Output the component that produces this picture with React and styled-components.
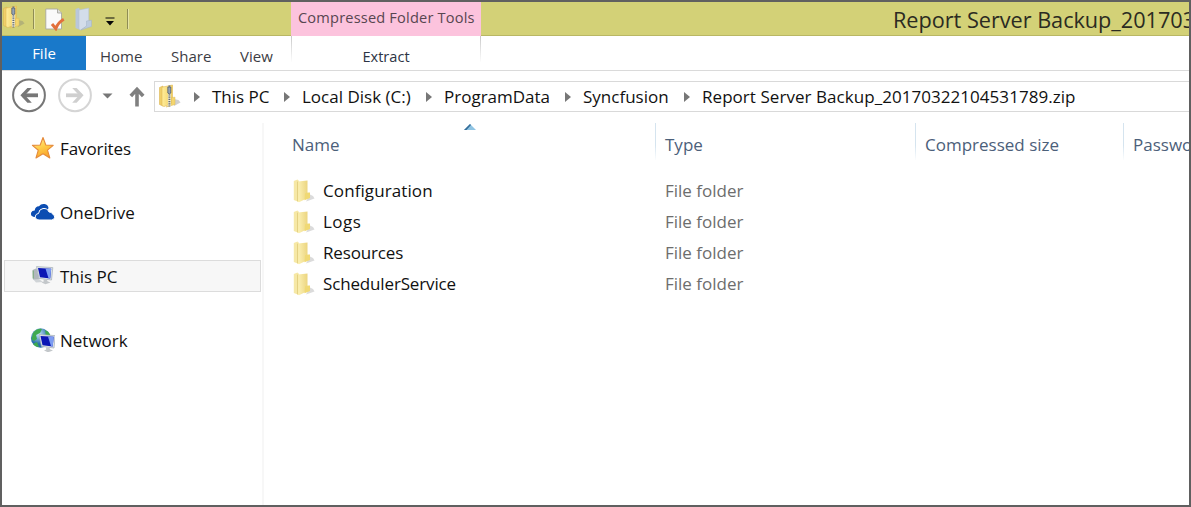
import React from "react";
import styled, { createGlobalStyle } from "styled-components";

const GlobalStyle = createGlobalStyle`
  * { box-sizing: border-box; }
  body { margin: 0; background: #fff; overflow: hidden; }
  svg { display: block; flex: none; }
`;

const Window = styled.div`
  width: 1191px;
  height: 507px;
  border: 2px solid #606060;
  background: #fff;
  display: flex;
  flex-direction: column;
  overflow: hidden;
  font-family: "Open Sans", "Noto Sans", sans-serif;
  font-size: 17px;
  color: #111;
  white-space: nowrap;
`;

const TitleBar = styled.header`
  flex: none;
  height: 34px;
  display: flex;
  background: #d3d177;
  box-shadow: inset 0 -1px #b9b764;
`;

const QuickAccess = styled.div`
  width: 289px;
  display: flex;
  align-items: flex-start;
`;

const Separator = styled.i`
  width: 2px;
  height: 20px;
  margin: 7px 0 0 ${(p) => p.$left}px;
  background: linear-gradient(90deg, #8f8d55 50%, #e7e5a4 50%);
`;

const ContextTitle = styled.div`
  width: 190px;
  background: #fcc3dd;
  color: #574650;
  font-size: 14.6px;
  line-height: 30px;
  padding-left: 7px;
  letter-spacing: 0.18px;
`;

const WindowTitle = styled.div`
  margin-left: 412px;
  flex: 1;
  min-width: 0;
  overflow: hidden;
  font-size: 21.7px;
  line-height: 35px;
  color: #2b2b22;
  letter-spacing: -0.03px;
`;

const Ribbon = styled.nav`
  flex: none;
  height: 35px;
  display: flex;
  border-bottom: 1px solid #dadada;
  font-size: 15px;
  line-height: 41px;
  color: #3c3c44;
`;

const FileTab = styled.div`
  width: 84px;
  background: #1979ca;
  color: #fff;
  text-align: center;
  line-height: 34px;
`;

const Tab = styled.div`
  width: ${(p) => p.$w}px;
  padding-left: ${(p) => p.$pad}px;
`;

const ContextTab = styled.div`
  width: 190px;
  height: 26px;
  text-align: center;
  border: solid;
  border-width: 0 1px;
  border-image: linear-gradient(#c6c6c6, #fff) 1;
  color: #2d3444;
  font-size: 14.6px;
`;

const NavRow = styled.div`
  flex: none;
  height: 49px;
  padding: 7px 0 0 10px;
  display: flex;
  align-items: flex-start;
`;

const NavButtons = styled.div`
  width: 142px;
  height: 35px;
  display: flex;
`;

const NavGap = styled.span`
  width: 11px;
`;

const AddressBar = styled.div`
  flex: 1;
  min-width: 0;
  height: 31px;
  margin-top: 3px;
  border: 1px solid #d9d9d9;
  border-right: 0;
  display: flex;
  align-items: center;
`;

const AddressIcon = styled.span`
  width: 39px;
  padding: 0 0 2px 3px;
`;

const Crumb = styled.span`
  width: ${(p) => p.$w}px;
  letter-spacing: ${(p) => p.$track || 0}px;
  padding-bottom: 1px;
`;

const CrumbArrow = styled.i`
  margin-right: 12px;
  border: 5.5px solid transparent;
  border-left: 6px solid #777;
  border-right: 0;
`;

const Body = styled.div`
  flex: 1;
  display: flex;
  padding-top: 3px;
`;

const Sidebar = styled.aside`
  width: 262px;
  border-right: 2px solid #f7f7f7;
  padding: 9px 1px 0 2px;
  display: flex;
  flex-direction: column;
  gap: 32px;
`;

const SideItem = styled.div`
  height: 32px;
  border: 1px solid ${(p) => (p.$active ? "#dcdcdc" : "transparent")};
  background: ${(p) => (p.$active ? "#f7f7f7" : "transparent")};
  display: flex;
  align-items: center;
  gap: 5px;
  padding-left: 25px;
  letter-spacing: ${(p) => p.$track || 0}px;

  svg { margin-bottom: 1px; }
  span { padding-top: 1px; }
`;

const Listing = styled.main`
  flex: 1;
  min-width: 0;
`;

const HeaderRow = styled.div`
  display: flex;
  height: 52px;
`;

const HeaderCell = styled.div`
  position: relative;
  flex: none;
  width: ${(p) => p.$w}px;
  height: 37px;
  padding-left: ${(p) => p.$pad}px;
  line-height: 43px;
  color: #4c607a;
  border: solid;
  border-width: 0 1px 0 0;
  border-image: linear-gradient(#d5e4ef 60%, #fff) 1;
`;

const SortMark = styled.svg`
  position: absolute;
  left: 200px;
  top: 1px;
`;

const FileRow = styled.div`
  height: 31px;
  display: flex;
  align-items: center;
  padding-left: 29px;
`;

const FileName = styled.span`
  width: 350px;
  padding: 0 0 1px 8px;
  letter-spacing: ${(p) => p.$track || 0}px;
`;

const FileType = styled.span`
  color: #6d6d6d;
  padding-bottom: 1px;
`;

const ZipIcon = () => (
  <svg width="23" height="24" viewBox="0 0 23 24">
    <defs>
      <linearGradient id="zipFront" x1="0" x2="1">
        <stop offset="0" stopColor="#ffed9b" />
        <stop offset="1" stopColor="#f0cd5e" />
      </linearGradient>
    </defs>
    <path d="M16 22 L22.5 18.5 L20.5 16 L16 15Z" fill="#777" opacity=".35" />
    <path d="M1.5 3.5 L5 2 V22 L1.5 20.5Z" fill="#f0cf6a" stroke="#dcb650" strokeWidth=".6" />
    <path d="M4 3.2 L14.5 1 V19 L6 22.6 L4 21.5Z" fill="url(#zipFront)" stroke="#e0bb55" strokeWidth=".6" />
    <path d="M13.5 13.5 L17 13.2 V20.5 L8 23 L13.5 19.5Z" fill="#f4d66e" stroke="#dfba58" strokeWidth=".5" />
    <path d="M11.4 2 V22" stroke="#efe9cc" strokeWidth="3" />
    <path d="M11.4 1.6 V22.4" stroke="#666c72" strokeWidth="1.9" strokeDasharray="1.2 1" />
    <path d="M9.8 3 H12.8 V9 L11.4 10 L9.8 9Z" fill="#93a3b8" stroke="#4a545e" strokeWidth=".7" />
  </svg>
);

const CheckPageIcon = () => (
  <svg width="20" height="24" viewBox="0 0 20 24">
    <path d="M.8 2 H12.5 L16.5 6 V22 H.8Z" fill="#fafafa" stroke="#a8a8a0" strokeWidth=".9" />
    <path d="M12.5 2 V6 H16.5" fill="#ddd" stroke="#a8a8a0" strokeWidth=".9" />
    <path d="M7 17 L10.8 21.6 Q13 15.5 18.8 12.3" fill="none" stroke="#e2703c" strokeWidth="3" />
  </svg>
);

const BlueFolderIcon = () => (
  <svg width="18" height="24" viewBox="0 0 18 24">
    <path d="M.5 2 L4 .8 L5 3 V23 L.5 21Z" fill="#b9c7da" />
    <path d="M4 3 L13.8 1 V18 L5.5 23 L4 22Z" fill="#d3ddea" stroke="#b0bed0" strokeWidth=".5" />
    <path d="M11.5 14 L16.5 13.2 V19.5 L6 23 L11.5 19Z" fill="#bccbde" stroke="#a3b4c8" strokeWidth=".5" />
  </svg>
);

const CustomizeIcon = () => (
  <svg width="10" height="9" viewBox="0 0 10 9">
    <path d="M.5 .5H9.5V1.6H.5Z M1 4H9L5 8.4Z" fill="#080808" />
  </svg>
);

const RoundArrow = ({ color, ring, flip }) => (
  <svg width="35" height="35" viewBox="0 0 35 35">
    <circle cx="17" cy="17.3" r="15.9" fill="none" stroke={ring} strokeWidth="2" />
    <g transform={flip ? "translate(34 .3) scale(-1 1)" : "translate(0 .3)"}>
      <path d="M10.5 17H26" fill="none" stroke={color} strokeWidth="3.8" />
      <path d="M8.4 17L15.4 9.6H19.8L12.9 17L19.8 24.4H15.4Z" fill={color} />
    </g>
  </svg>
);

const FolderIcon = () => (
  <svg width="22" height="24" viewBox="0 0 22 24">
    <defs>
      <linearGradient id="folderFace" x1="0" y1=".1" x2="1" y2="0">
        <stop offset="0" stopColor="#fcf1b4" />
        <stop offset="1" stopColor="#ebd47e" />
      </linearGradient>
    </defs>
    <path d="M13 22.5 L21.5 19.5 L20 17 L17 15.5Z" fill="#888" opacity=".3" />
    <path d="M.8 2 L4.5 .6 L6 2 V23 L.8 21Z" fill="#f6e8a6" />
    <path d="M5 2.4 L14.5 1.4 V19 L6 23.2 L4.6 22.6Z" fill="url(#folderFace)" />
    <path d="M4.6 2.6 V22.4" stroke="#dcc673" strokeWidth=".8" />
    <path d="M12 14.6 Q12.5 13.2 17 13.4 V19 L11.5 21.2Z" fill="#f0d974" />
  </svg>
);

const StarIcon = () => (
  <svg width="25" height="24" viewBox="0 0 25 24">
    <defs>
      <linearGradient id="starFill" x2=".4" y2="1">
        <stop offset="0" stopColor="#fff1a0" />
        <stop offset=".55" stopColor="#ffce4a" />
        <stop offset="1" stopColor="#f9a72c" />
      </linearGradient>
    </defs>
    <path d="M13 1.5 L15.8 9 L23.2 9.4 L17.5 14.2 L19.8 22 L13 17.8 L6 22 L8.3 14.2 L2.4 9.4 L10.2 9Z" fill="url(#starFill)" stroke="#e58b3c" strokeWidth="1.1" strokeLinejoin="round" />
  </svg>
);

const CloudIcon = () => (
  <svg width="25" height="24" viewBox="0 0 25 24">
    <path d="M4 17 Q0 16 1.2 12.5 Q2 10.5 4.7 10.5 Q5 6.5 9 6.3 Q11 3.5 14.5 4 Q18 4.4 18.5 8 L14 17Z" fill="#0c4db2" />
    <path d="M9 20 Q4.7 19.5 5.4 16 Q6 13.6 8.5 13.5 Q9 9 13 8.5 Q17.5 8 19 12 Q22 11.8 22.7 14.3 Q25 15 24.6 17.4 Q24.2 20 21.5 20Z" fill="#0c4db2" stroke="#fff" strokeWidth="1" />
  </svg>
);

const Monitor = () => (
  <g>
    <path d="M6.5 2.6 L22.8 3.6 L21.5 16 L9 14.4Z" fill="#dfe5ea" stroke="#a4adb5" strokeWidth=".7" />
    <path d="M8 4 L21.2 4.7 L20.2 14.4 L10 13.2Z" fill="#0b16b5" />
    <path d="M15.5 4.4 L21.2 4.7 L20.2 14.4 L18.5 14.2Z" fill="#7d9df2" />
    <path d="M13.5 15.2 L17 15.7 L17.5 17.3 L20.5 18.6 L15.5 20.3 L11.5 18.6 L13.7 17.4Z" fill="#c3c7ca" />
  </g>
);

const PcIcon = () => (
  <svg width="25" height="24" viewBox="0 0 25 24">
    <path d="M2.6 6 L6.5 4.2 L9 14.5 L8 17 L3 15.4Z" fill="#b1b8bc" />
    <path d="M3.2 6.5V14.5" stroke="#74a874" />
    <Monitor />
    <path d="M3.4 15.6 L9 15 L13 18 L6 18.6Z" fill="#d0d4d7" />
  </svg>
);

const NetworkIcon = () => (
  <svg width="25" height="24" viewBox="0 0 25 24">
    <defs>
      <radialGradient id="globe" cx=".4" cy=".3">
        <stop offset="0" stopColor="#c5e8fb" />
        <stop offset="1" stopColor="#286fab" />
      </radialGradient>
    </defs>
    <circle cx="10.6" cy="10" r="9.7" fill="url(#globe)" />
    <path d="M3 5 Q7 0 12 1 L10 5 L6 7 L7 11 L4 13 L1.5 11Z M15 2 Q20 4 20.5 8 L16 8Z M3 16 L7 14 L9 19 Q5 19 3 16Z" fill="#3faa50" />
    <g transform="translate(2.5 4)">
      <Monitor />
    </g>
  </svg>
);

// name, letter spacing
const files = [
  ["Configuration", 0.1],
  ["Logs", 0.5],
  ["Resources", -0.15],
  ["SchedulerService", -0.15],
];

const places = [
  ["Favorites", StarIcon, -0.1],
  ["OneDrive", CloudIcon, 0],
  ["This PC", PcIcon, 0],
  ["Network", NetworkIcon, 0],
];

// label, width reserved for it, letter spacing
const crumbs = [
  ["This PC", 72, 0],
  ["Local Disk (C:)", 124, 0],
  ["ProgramData", 121, 0],
  ["Syncfusion", 101, 0],
  ["Report Server Backup_20170322104531789.zip", 400, 0.05],
];

const QuickSlot = styled.span`
  margin: ${(p) => p.$top}px 0 0 ${(p) => p.$left}px;
`;

export default function App() {
  return (
    <Window>
      <GlobalStyle />
      <TitleBar>
        <QuickAccess>
          <QuickSlot $top={3} $left={0}><ZipIcon /></QuickSlot>
          <Separator $left={8} />
          <QuickSlot $top={5} $left={10}><CheckPageIcon /></QuickSlot>
          <QuickSlot $top={5} $left={10}><BlueFolderIcon /></QuickSlot>
          <QuickSlot $top={15} $left={12}><CustomizeIcon /></QuickSlot>
          <Separator $left={12} />
        </QuickAccess>
        <ContextTitle>Compressed Folder Tools</ContextTitle>
        <WindowTitle>Report Server Backup_20170322104531789.zip</WindowTitle>
      </TitleBar>
      <Ribbon>
        <FileTab>File</FileTab>
        <Tab $w={70} $pad={14}>Home</Tab>
        <Tab $w={70} $pad={15}>Share</Tab>
        <Tab $w={65} $pad={14}>View</Tab>
        <ContextTab>Extract</ContextTab>
      </Ribbon>
      <NavRow>
        <NavButtons>
          <RoundArrow color="#777" ring="#777" />
          <NavGap />
          <RoundArrow color="#cfcfcf" ring="#d5d5d5" flip />
          <svg width="61" height="35" viewBox="0 0 61 35">
            <path d="M9.5 15.5H19.5L14.5 20.5Z" fill="#777" />
            <path d="M44 28.5V11 M37.8 18L44 11.3L50.2 18" fill="none" stroke="#808080" strokeWidth="3.6" />
          </svg>
        </NavButtons>
        <AddressBar>
          <AddressIcon><ZipIcon /></AddressIcon>
          {crumbs.map(([label, w, track]) => (
            <React.Fragment key={label}>
              <CrumbArrow />
              <Crumb $w={w} $track={track}>{label}</Crumb>
            </React.Fragment>
          ))}
        </AddressBar>
      </NavRow>
      <Body>
        <Sidebar>
          {places.map(([label, Icon, track]) => (
            <SideItem key={label} $active={label === "This PC"} $track={track}>
              <Icon />
              <span>{label}</span>
            </SideItem>
          ))}
        </Sidebar>
        <Listing>
          <HeaderRow>
            <HeaderCell $w={392} $pad={28}>
              Name
              <SortMark width="12" height="6" viewBox="0 0 12 6">
                <path d="M0 6L6 0L12 6Z" fill="#8fc4e3" />
                <path d="M0 6L6 0L7 1L2.5 6Z" fill="#356c98" />
              </SortMark>
            </HeaderCell>
            <HeaderCell $w={260} $pad={9}>Type</HeaderCell>
            <HeaderCell $w={208} $pad={9}>Compressed size</HeaderCell>
            <HeaderCell $w={100} $pad={9}>Password</HeaderCell>
          </HeaderRow>
          {files.map(([name, track]) => (
            <FileRow key={name}>
              <FolderIcon />
              <FileName $track={track}>{name}</FileName>
              <FileType>File folder</FileType>
            </FileRow>
          ))}
        </Listing>
      </Body>
    </Window>
  );
}
